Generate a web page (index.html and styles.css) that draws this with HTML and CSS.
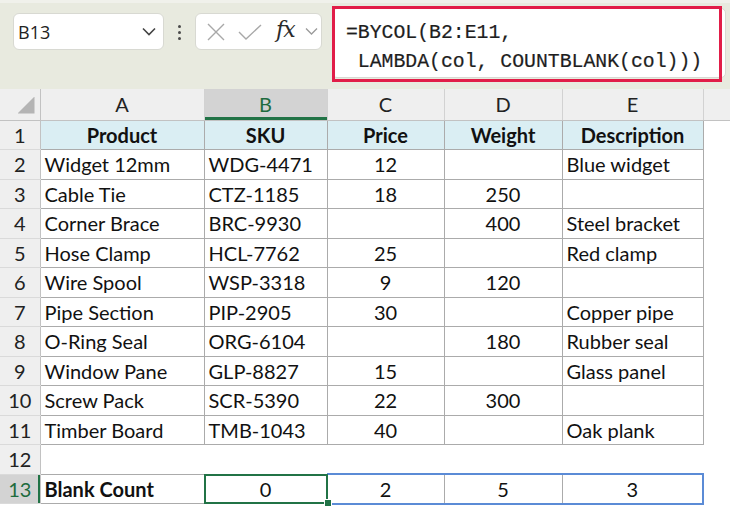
FILE: index.html
```html
<!DOCTYPE html>
<html lang="en">
<head>
  <meta charset="utf-8" />
  <title>BYCOL blank count</title>
  <meta name="viewport" content="width=device-width, initial-scale=1.0" />
  <link rel="stylesheet" href="styles.css">
</head>
<body>
  <div class="toolbar">
    <div class="namebox">
      <span>B13</span>
      <svg class="chev" width="14" height="9" viewBox="0 0 14 9"><polyline points="1,1.5 7,7.5 13,1.5" /></svg>
    </div>
    <div class="grip"><i></i><i></i><i></i></div>
    <div class="fxbox">
      <svg class="ico-x" width="18" height="18" viewBox="0 0 18 18"><path d="M1 1 L17 17 M17 1 L1 17" /></svg>
      <svg class="ico-ok" width="24" height="16" viewBox="0 0 24 16"><polyline points="1,8 8,15 23,1" /></svg>
      <span class="fx">fx</span>
      <svg class="chev light" width="13" height="9" viewBox="0 0 13 9"><polyline points="1,1.5 6.5,7 12,1.5" /></svg>
    </div>
    <div class="formula">
      <div class="formula-text">=BYCOL(B2:E11,<br>&nbsp;LAMBDA(col, COUNTBLANK(col)))</div>
      <div class="mark"></div>
    </div>
  </div>

  <table class="sheet">
    <colgroup>
      <col style="width:40px"><col style="width:164px"><col style="width:123px"><col style="width:117px">
      <col style="width:118px"><col style="width:141px"><col style="width:27px">
    </colgroup>
    <thead>
      <tr>
        <th class="corner"><div class="tri"></div></th>
        <th class="ch">A</th><th class="ch sel">B</th><th class="ch">C</th><th class="ch">D</th><th class="ch">E</th><th class="ch"></th>
      </tr>
    </thead>
    <tbody>
      <tr><th class="rh">1</th><td class="hd">Product</td><td class="hd">SKU</td><td class="hd">Price</td><td class="hd">Weight</td><td class="hd">Description</td><td class="off"></td></tr>
      <tr><th class="rh">2</th><td>Widget 12mm</td><td>WDG-4471</td><td class="num">12</td><td class="num"></td><td>Blue widget</td><td class="off"></td></tr>
      <tr><th class="rh">3</th><td>Cable Tie</td><td>CTZ-1185</td><td class="num">18</td><td class="num">250</td><td></td><td class="off"></td></tr>
      <tr><th class="rh">4</th><td>Corner Brace</td><td>BRC-9930</td><td class="num"></td><td class="num">400</td><td>Steel bracket</td><td class="off"></td></tr>
      <tr><th class="rh">5</th><td>Hose Clamp</td><td>HCL-7762</td><td class="num">25</td><td class="num"></td><td>Red clamp</td><td class="off"></td></tr>
      <tr><th class="rh">6</th><td>Wire Spool</td><td>WSP-3318</td><td class="num">9</td><td class="num">120</td><td></td><td class="off"></td></tr>
      <tr><th class="rh">7</th><td>Pipe Section</td><td>PIP-2905</td><td class="num">30</td><td class="num"></td><td>Copper pipe</td><td class="off"></td></tr>
      <tr><th class="rh">8</th><td>O-Ring Seal</td><td>ORG-6104</td><td class="num"></td><td class="num">180</td><td>Rubber seal</td><td class="off"></td></tr>
      <tr><th class="rh">9</th><td>Window Pane</td><td>GLP-8827</td><td class="num">15</td><td class="num"></td><td>Glass panel</td><td class="off"></td></tr>
      <tr><th class="rh">10</th><td>Screw Pack</td><td>SCR-5390</td><td class="num">22</td><td class="num">300</td><td></td><td class="off"></td></tr>
      <tr><th class="rh">11</th><td>Timber Board</td><td>TMB-1043</td><td class="num">40</td><td class="num"></td><td>Oak plank</td><td class="off"></td></tr>
      <tr class="gap"><th class="rh">12</th><td class="off"></td><td class="off"></td><td class="off"></td><td class="off"></td><td class="off"></td><td class="off"></td></tr>
      <tr><th class="rh cur">13</th><td class="bold">Blank Count</td><td class="num active">0<span class="handle"></span></td><td class="num spill">2</td><td class="num spill">5</td><td class="num spill end">3</td><td class="off"></td></tr>
    </tbody>
  </table>
</body>
</html>
```

FILE: styles.css
```css
body {
  margin: 0;
  width: 730px;
  height: 506px;
  overflow: hidden;
  background: #fff;
  font-family: Lato, 'Liberation Sans', sans-serif;
  color: #111;
}

/* formula bar area */
.toolbar {
  display: flex;
  align-items: flex-start;
  height: 89px;
  box-sizing: border-box;
  padding-left: 13px;
  background: #e8eadf;
  border-top: 3px solid #f0f1eb;
}

.namebox {
  margin-top: 10px;
  width: 151px;
  height: 37px;
  box-sizing: border-box;
  display: flex;
  align-items: center;
  justify-content: space-between;
  padding: 0 7px 0 4px;
  background: #fff;
  border: 1px solid #d8d9d2;
  border-radius: 6px;
  font-family: 'Open Sans', sans-serif;
  font-size: 18px;
  color: #222;
}

.chev polyline {
  fill: none;
  stroke: #444;
  stroke-width: 1.6;
}
.chev.light polyline { stroke: #9a9a9a; stroke-width: 1.3; }

.grip {
  margin: 22px 0 0 14px;
  display: flex;
  flex-direction: column;
  gap: 3px;
}
.grip i {
  display: block;
  width: 3px;
  height: 3px;
  border-radius: 50%;
  background: #4a4a4a;
}

.fxbox {
  margin: 10px 0 0 14px;
  width: 127px;
  height: 37px;
  box-sizing: border-box;
  display: flex;
  align-items: center;
  padding-left: 11px;
  background: #fff;
  border: 1px solid #d8d9d2;
  border-radius: 6px;
}

.ico-x path, .ico-ok polyline {
  fill: none;
  stroke: #a8a8a8;
  stroke-width: 1.4;
}
.ico-ok { margin-left: 13px; }

.fx {
  margin-left: 14px;
  width: 21px;
  font-family: 'DejaVu Serif', serif;
  font-style: italic;
  font-size: 22px;
  line-height: 1;
  color: #2a2a2a;
  letter-spacing: -1px;
  position: relative;
  top: -2px;
}
.fxbox .chev { margin-left: 8px; }

.formula {
  position: relative;
  margin: 5px 0 0 10px;
  width: 394px;
  height: 70px;
  box-sizing: border-box;
  background: #fff;
  border: 1px solid #d8d9d2;
  border-radius: 5px;
}

.formula-text {
  padding: 10px 0 0 13px;
  font-family: 'Liberation Mono', monospace;
  font-size: 19.8px;
  line-height: 29px;
  color: #1e1e1e;
  white-space: nowrap;
  -webkit-text-stroke: 0.2px #1e1e1e;
}

/* red call-out drawn over the formula */
.mark {
  position: absolute;
  left: -1px;
  top: -3px;
  width: 390px;
  height: 76px;
  box-sizing: border-box;
  border: 3px solid #e11d48;
}

/* grid */
.sheet {
  border-collapse: collapse;
  table-layout: fixed;
  width: 730px;
  font-size: 20px;
}

.sheet th {
  font-weight: normal;
  background: #efefef;
  color: #222;
  padding: 0;
}

.sheet thead tr { height: 31px; }
.sheet tbody tr { height: 29.5px; }

.ch {
  border-right: 1px solid #d2d2d2;
  border-bottom: 1px solid #c2c2c2;
}
.ch.sel {
  background: #d3d3d3;
  color: #1e6b3e;
  box-shadow: inset 0 -3px 0 #217346;
}

.corner {
  vertical-align: bottom;
  border-right: 1px solid #c2c2c2;
  border-bottom: 1px solid #c2c2c2;
  padding: 0 5px 6px 0 !important;
}
.tri {
  width: 17px;
  height: 17px;
  margin-left: auto;
  background: #b4b4b4;
  clip-path: polygon(100% 0, 100% 100%, 0 100%);
}

.rh {
  border-right: 1px solid #c2c2c2;
  border-bottom: 1px solid #dadada;
}
.rh.cur {
  background: #d3d3d3;
  color: #1e6b3e;
  box-shadow: inset -2px 0 0 #217346;
}

.sheet td {
  padding: 0 4px;
  border: 1px solid #ababab;
  white-space: nowrap;
  overflow: hidden;
  color: #111;
}
.sheet td.off { border: none; }

.hd {
  background: #daeef3;
  font-weight: bold;
  text-align: center;
}
.num { text-align: center; }
.bold { font-weight: bold; }

.sheet td.active {
  position: relative;
  overflow: visible;
}
.active::after {
  content: "";
  position: absolute;
  left: -1px;
  top: -1px;
  right: -1px;
  bottom: -1px;
  border: 2px solid #217346;
}
.handle {
  position: absolute;
  right: -5px;
  bottom: -4px;
  width: 6px;
  height: 6px;
  background: #217346;
  border: 1px solid #fff;
  z-index: 2;
}

.sheet td.spill {
  border-top: 2px solid #5b8bd6;
  border-bottom: 2px solid #5b8bd6;
}
.sheet td.spill.end { border-right: 2px solid #5b8bd6; }
```
